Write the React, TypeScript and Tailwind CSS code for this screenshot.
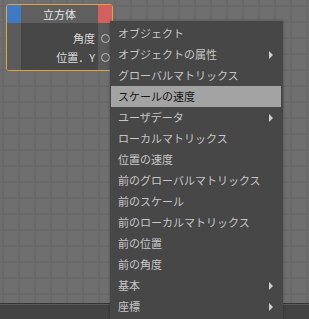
import React from 'react';

type Item = { label: string; sub?: boolean; active?: boolean };

const items: Item[] = [
  { label: 'オブジェクト' },
  { label: 'オブジェクトの属性', sub: true },
  { label: 'グローバルマトリックス' },
  { label: 'スケールの速度', active: true },
  { label: 'ユーザデータ', sub: true },
  { label: 'ローカルマトリックス' },
  { label: '位置の速度' },
  { label: '前のグローバルマトリックス' },
  { label: '前のスケール' },
  { label: '前のローカルマトリックス' },
  { label: '前の位置' },
  { label: '前の角度' },
  { label: '基本', sub: true },
  { label: '座標', sub: true },
];

const font = { fontFamily: '"Noto Sans CJK JP", "Noto Sans", sans-serif' };

const Port: React.FC = () => (
  <span className="w-[9px] h-[9px] rounded-full border border-[#bdbdbd]" />
);

const Node: React.FC = () => (
  <div className="absolute left-[6px] top-[4px] w-[107px] h-[67px] rounded-[3px] border border-[#e2a23c] overflow-hidden flex flex-col">
    <div className="flex h-[18px] shrink-0">
      <div className="w-[14px] bg-[#3f7bc5]" />
      <div className="flex-1 bg-[#5f5f5f] flex items-center justify-center text-[11px] text-[#e4e4e4]">立方体</div>
      <div className="w-[14px] bg-[#d2605f]" />
    </div>
    <div className="flex flex-1">
      <div className="w-[14px] bg-[#5b5b5b]" />
      <div className="flex-1 bg-[#474747] flex flex-col items-end pr-[3px] pt-[7px] gap-[3px] text-[11px] text-[#dcdcdc] whitespace-nowrap">
        <div className="h-[16px] leading-[16px]">角度</div>
        <div className="h-[16px] leading-[16px]">位置．Y</div>
      </div>
      <div className="w-[14px] bg-[#5a5a5a] flex flex-col items-center pt-[11px] gap-[10px]">
        <Port />
        <Port />
      </div>
    </div>
  </div>
);

const Menu: React.FC = () => (
  <div className="absolute left-[110px] top-[21px] w-[173px] h-[320px] bg-[#474747] pt-[2px] pl-[1px] pr-[2px] shadow-[0_0_3px_rgba(0,0,0,0.3)]">
    {items.map((it) => (
      <div
        key={it.label}
        className={`h-[21px] flex items-center justify-between pl-[7px] pr-[8px] text-[11px] whitespace-nowrap ${
          it.active ? 'bg-[#a3a3a3] text-[#161616]' : 'text-[#c6c6c6]'
        }`}
      >
        <span>{it.label}</span>
        {it.sub && (
          <span className="w-0 h-0 border-y-[4px] border-y-transparent border-l-[4px] border-l-[#cfcfcf]" />
        )}
      </div>
    ))}
  </div>
);

const App: React.FC = () => {
  return (
    <div className="relative w-[309px] h-[319px] overflow-hidden flex flex-col" style={font}>
      <div className="relative flex-1 bg-[#6f6f6f] bg-[linear-gradient(to_right,#696969_2px,transparent_2px),linear-gradient(to_bottom,#696969_2px,transparent_2px)] bg-[size:16px_16px] bg-[position:2px_5px]">
        <Node />
      </div>
      <div className="h-[16px] shrink-0 border-t border-[#333] bg-[#434343] shadow-[inset_0_1px_0_#5a5a5a]" />
      <Menu />
    </div>
  );
};

export default App;
